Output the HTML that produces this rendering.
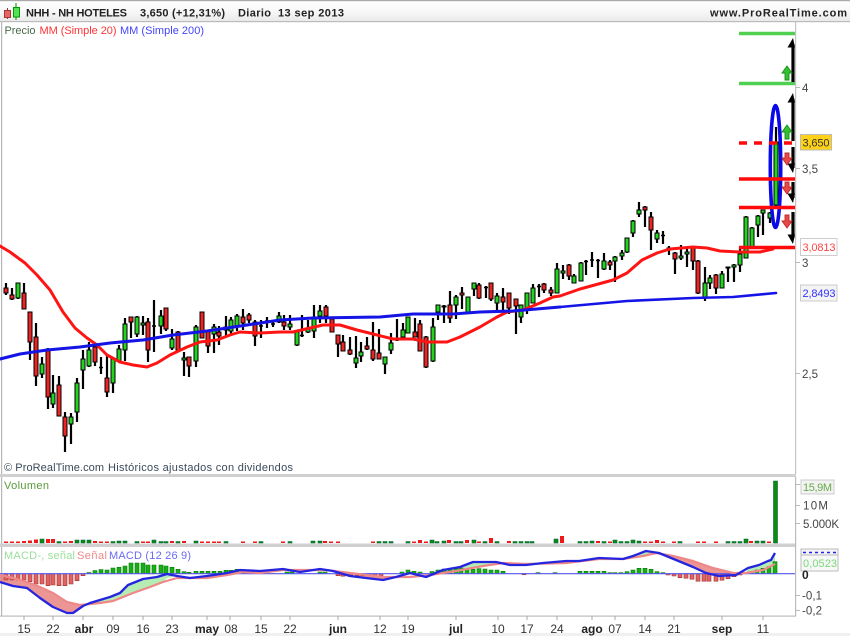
<!DOCTYPE html>
<html lang="es"><head><meta charset="utf-8"><title>NHH - NH HOTELES</title>
<style>
html,body{margin:0;padding:0;background:#fff;width:850px;height:636px;overflow:hidden}
svg{display:block;filter:blur(.35px)}
text{font-family:"Liberation Sans",sans-serif;font-size:11px}
.b{font-weight:bold;fill:#222}
.x{text-anchor:middle;fill:#333;font-size:12px}
.xb{text-anchor:middle;fill:#222;font-weight:bold;font-size:12px}
.a{fill:#444;font-size:11.5px}
</style></head><body>
<svg width="850" height="636" viewBox="0 0 850 636" xmlns="http://www.w3.org/2000/svg">
<defs><linearGradient id="hd" x1="0" y1="0" x2="0" y2="1"><stop offset="0" stop-color="#fff"/><stop offset=".5" stop-color="#f8f8f8"/><stop offset="1" stop-color="#e8e8e8"/></linearGradient></defs>
<rect width="850" height="636" fill="#fff"/>
<rect y="633" width="850" height="3" fill="#f0f0f0"/>
<!-- header -->
<rect x="0" y="0" width="850" height="22" fill="url(#hd)"/>
<rect x="0" y="0" width="850" height="1.2" fill="#aaa"/>
<rect x="0" y="21" width="850" height="1.2" fill="#bbb"/>
<rect x="1" y="22" width="1.2" height="594" fill="#b8b8b8"/>
<path d="M7.5 8V19" stroke="#933" stroke-width="1"/><rect x="4.5" y="10.5" width="6" height="7" fill="#e26666" stroke="#a33"/>
<path d="M16 3V20" stroke="#080" stroke-width="1"/><rect x="13.5" y="7.5" width="6" height="9.5" fill="#55e055" stroke="#090"/>
<text x="26" y="16.5" class="b" textLength="101">NHH - NH HOTELES</text>
<text x="140" y="16.5" class="b" textLength="85">3,650 (+12,31%)</text>
<text x="238" y="16.5" class="b" textLength="33">Diario</text>
<text x="278" y="16.5" class="b" textLength="66">13 sep 2013</text>
<text x="710" y="16.5" class="b" textLength="137">www.ProRealTime.com</text>
<text x="4.5" y="34" fill="#4a6a4a" textLength="31">Precio</text>
<text x="39.5" y="34" fill="#f33" textLength="77">MM (Simple 20)</text>
<text x="120" y="34" fill="#44f" textLength="84">MM (Simple 200)</text>
<!-- panels -->
<rect x="795" y="22" width="1.2" height="452" fill="#c4c4c4"/>
<rect x="0" y="474" width="796" height="3" fill="#d0d0d0"/>
<rect x="0" y="543.5" width="796" height="3.5" fill="#d0d0d0"/>
<rect x="795" y="477" width="1.2" height="139" fill="#bbb"/>
<rect x="0" y="615.5" width="796" height="1.2" fill="#bbb"/>
<path d="M796 87.5h4M796 168.5h4M796 262.5h4M796 373.5h4M796 484.5h4M796 505.5h4M796 523.5h4M796 595.5h4M796 610.5h4" stroke="#bbb" stroke-width="1"/>
<!-- candles: wicks -->
<path fill="none" stroke="#000" stroke-width="2.2" d="M6 283V295M12 288V300M18 283V299M24 283V309M30 312V360M36 323V386M42 357V378M48 348V409M53 375V408M59 376V416M65 412V452M71 413V444M77 378V422M83 350V389M89 342V367M95 345V366M101 357V374M107 355V397M113 358V393M119 345V362M125 318V361M131 317V338M137 316V337M143 316V335M148 318V362M154 300V352M161 310V334M166 308V331M172 329V350M178 331V352M184 352V376M189 357V377M196 325V367M202 312V338M208 330V353M214 324V353M219 326V345M226 316V336M231 317V335M237 314V331M243 309V330M249 313V323M255 320V346M261 320V338M267 317V328M273 320V327M279 312V323M284 315V330M290 315V330M297 330V346M302 315V337M308 320V333M314 305V338M320 305V323M326 305V323M332 319V332M338 335V357M343 335V351M350 337V355M356 336V368M361 342V362M367 337V350M373 322V361M379 329V359M385 357V374M391 333V354M397 319V341M403 323V337M408 317V333M415 318V337M420 320V351M426 336V368M433 318V362M438 305V320M444 305V323M450 291V323M456 295V319M462 287V309M468 297V312M474 283V296M479 283V299M486 286V298M491 283V301M497 293V313M503 288V310M509 293V314M516 299V334M521 305V323M527 293V314M533 284V303M539 284V297M544 283V293M551 287V296M557 263V293M563 265V279M569 264V280M574 274V283M581 262V281M586 260V275M592 252V267M598 259V278M604 253V270M610 260V270M615 256V282M622 250V260M627 238V253M633 220V237M639 202V217M645 206V227M651 212V250M657 230V243M663 231V244M669 246V255M675 252V274M681 245V260M687 248V267M693 246V270M698 260V294M705 267V301M710 275V289M716 274V294M722 271V288M728 267V282M734 264V282M740 247V272M746 216V258M752 227V247M758 215V237M763 210V235M770 212V223M776 127V207"/>
<path fill="none" stroke="#000" d="M99 367.5h4M152 326h4M265 321h4M259 326h4M271 324h4M300 335.5h4M395 340h4M484 287.5h4M537 286.5h4M584 261.5h4M590 260h4M596 260.5h4M661 235.5h4" style="stroke-width:1.6"/>
<!-- green bodies -->
<path fill="#22d41e" stroke="#000" stroke-width="1" d="M16 283h4v15h-4zM40 364h4v10h-4zM51 393h4v11h-4zM69 417h4v7h-4zM75 383h4v29h-4zM81 359h4v11h-4zM87 350h4v16h-4zM111 359h4v24h-4zM117 349h4v12h-4zM123 324h4v26h-4zM135 317h4v17h-4zM141 323h4v2h-4zM159 316h4v10h-4zM170 339h4v9h-4zM182 358h4v2h-4zM194 327h4v34h-4zM212 327h4v7h-4zM224 327h4v3h-4zM229 320h4v11h-4zM235 316h4v10h-4zM277 316h4v6h-4zM288 324h4v3h-4zM295 332h4v13h-4zM306 329h4v3h-4zM312 319h4v12h-4zM318 311h4v5h-4zM354 358h4v5h-4zM359 352h4v4h-4zM383 357h4v7h-4zM389 343h4v7h-4zM401 330h4v7h-4zM406 317h4v16h-4zM431 327h4v34h-4zM436 305h4v7h-4zM442 306h4v1h-4zM454 297h4v8h-4zM466 297h4v15h-4zM472 283h4v6h-4zM495 296h4v7h-4zM519 305h4v12h-4zM525 293h4v15h-4zM531 288h4v15h-4zM555 269h4v24h-4zM561 271h4v2h-4zM572 276h4v7h-4zM579 263h4v18h-4zM602 261h4v8h-4zM613 257h4v4h-4zM620 253h4v3h-4zM625 238h4v14h-4zM631 221h4v12h-4zM637 210h4v4h-4zM655 233h4v6h-4zM667 248h4v2h-4zM679 256h4v2h-4zM685 252h4v2h-4zM703 283h4v15h-4zM708 278h4v5h-4zM720 274h4v14h-4zM726 267h4v1h-4zM732 265h4v2h-4zM738 254h4v11h-4zM744 217h4v41h-4zM750 228h4v19h-4zM756 216h4v9h-4zM761 210h4v3h-4zM768 213h4v5h-4zM774 142h4v63h-4z"/>
<!-- red bodies -->
<path fill="#ee2424" stroke="#000" stroke-width="1" d="M4 288h4v5h-4zM10 295h4v4h-4zM22 293h4v16h-4zM28 312h4v30h-4zM34 337h4v39h-4zM46 349h4v48h-4zM57 385h4v31h-4zM63 417h4v19h-4zM93 347h4v15h-4zM105 378h4v14h-4zM129 317h4v5h-4zM146 322h4v28h-4zM164 308h4v21h-4zM176 332h4v18h-4zM187 357h4v9h-4zM200 312h4v26h-4zM206 331h4v15h-4zM217 332h4v4h-4zM241 317h4v6h-4zM247 315h4v5h-4zM253 322h4v14h-4zM282 322h4v4h-4zM324 307h4v9h-4zM330 319h4v13h-4zM336 335h4v9h-4zM341 342h4v9h-4zM348 350h4v4h-4zM365 346h4v3h-4zM371 350h4v9h-4zM377 353h4v6h-4zM413 332h4v5h-4zM418 324h4v27h-4zM424 337h4v30h-4zM448 305h4v13h-4zM460 293h4v2h-4zM477 285h4v13h-4zM489 283h4v16h-4zM501 297h4v5h-4zM507 293h4v15h-4zM514 299h4v7h-4zM542 284h4v6h-4zM549 290h4v3h-4zM567 265h4v11h-4zM608 262h4v3h-4zM643 207h4v3h-4zM649 217h4v13h-4zM673 253h4v6h-4zM691 247h4v14h-4zM696 261h4v32h-4zM714 275h4v13h-4z"/>
<!-- moving averages -->
<path fill="none" stroke="#ff1414" stroke-width="3" stroke-linejoin="round" stroke-linecap="round" d="M0 246L10 252L25 263L37 275L50 290L63 312L75 328L87 338L97 345L107 355L120 362L133 365L147 367L157 363L170 355L187 347L200 342L217 340L230 335L240 332L260 333L280 332L293 332L310 328L323 325L340 325L357 330L377 335L393 339L413 339L427 342L447 342L460 337L480 327L497 317L507 312L523 310L540 303L553 297L560 296L580 289L613 280L627 273L642 260L657 253L670 249L693 247L707 248L720 251L740 252L760 252L773 249"/>
<path fill="none" stroke="#1414e6" stroke-width="3.1" stroke-linejoin="round" stroke-linecap="round" d="M0 359L20 354L47 350L80 347L110 343L143 340L173 335L207 331L247 325L280 320L313 318L380 317L413 314L453 314L480 312L513 311L560 307"/>
<path fill="none" stroke="#1414e6" stroke-width="2.6" stroke-linejoin="round" stroke-linecap="round" d="M560 307L627 301L693 298L733 297L776 293"/>
<ellipse cx="775.5" cy="166.5" rx="5.2" ry="61" fill="none" stroke="#0808e8" stroke-width="3.6"/>
<!-- levels -->
<path stroke="#50d050" stroke-width="3.4" d="M739 33.5H795M739 83.5H795"/>
<path stroke="#ff0a0a" stroke-width="3.4" d="M739 179H795M739 207.5H795M739 247.5H795"/>
<path stroke="#ff0a0a" stroke-width="3.4" d="M739 143h8M754 143h8M769 143h8M784 143h8"/>
<!-- black arrows -->
<path fill="none" stroke="#000" stroke-width="3.2" d="M793 44V82M793 99V141M793 147V168M793 182V198M793 212V238"/>
<path fill="#000" d="M793 38L787.5 47.5H795zM793 93L787.5 102.5H795zM793 173L787.5 163.5H795zM793 203L787.5 193.5H795zM793 244L787.5 234.5H795z"/>
<!-- small arrows -->
<path fill="#33c033" stroke="#169016" stroke-width=".9" d="M787 66L782 73H785V80H789V73H792z"/>
<path fill="#33c033" stroke="#169016" stroke-width=".9" d="M787 125L782 132H785V139H789V132H792z"/>
<path fill="#e84848" stroke="#c02828" stroke-width=".9" d="M787 165L782 158H785V153H789V158H792z"/>
<path fill="#e84848" stroke="#c02828" stroke-width=".9" d="M787 194L782 187H785V182H789V187H792z"/>
<path fill="#e84848" stroke="#c02828" stroke-width=".9" d="M787 228L782 221H785V215H789V221H792z"/>
<!-- price labels -->
<text x="802" y="92" class="a">4</text>
<text x="802" y="173" class="a" textLength="16">3,5</text>
<text x="802" y="267" class="a">3</text>
<text x="802" y="378" class="a" textLength="16">2,5</text>
<rect x="800.5" y="134.5" width="31" height="15.5" fill="#ffd21a" stroke="#bbb"/>
<text x="802.5" y="146.5" fill="#333" textLength="27">3,650</text>
<rect x="800.5" y="238.5" width="36.5" height="17" fill="#fff" stroke="#ccc"/>
<text x="802.5" y="251" fill="#f44" textLength="33">3,0813</text>
<rect x="800.5" y="285" width="36.5" height="16" fill="#f4f4f4" stroke="#ccc"/>
<text x="802.5" y="297" fill="#33f" textLength="33">2,8493</text>
<text x="4" y="471" fill="#3a4a5a" textLength="100">© ProRealTime.com</text>
<text x="108" y="471" fill="#3a4a5a" textLength="185">Históricos ajustados con dividendos</text>
<!-- volume -->
<text x="4" y="489" fill="#5a9a3a" textLength="45">Volumen</text>
<path fill="#0b8a0b" stroke="#064" stroke-width=".6" d="M40 539h4v4h-4zM57 541.5h4v1.5h-4zM75 540h4v3h-4zM81 540h4v3h-4zM87 540h4v3h-4zM111 541.5h4v1.5h-4zM117 541h4v2h-4zM123 541h4v2h-4zM135 541.5h4v1.5h-4zM152 540h4v3h-4zM159 541.5h4v1.5h-4zM164 541.5h4v1.5h-4zM176 541.5h4v1.5h-4zM194 541h4v2h-4zM224 541.5h4v1.5h-4zM259 541.5h4v1.5h-4zM288 541.5h4v1.5h-4zM311 541h4v2h-4zM318 541h4v2h-4zM377 541.5h4v1.5h-4zM383 541.5h4v1.5h-4zM389 541.5h4v1.5h-4zM406 541.5h4v1.5h-4zM430 540h4v3h-4zM435 541.5h4v1.5h-4zM442 541h4v2h-4zM454 541.5h4v1.5h-4zM459 541.5h4v1.5h-4zM472 540h4v3h-4zM483 541.5h4v1.5h-4zM495 541.5h4v1.5h-4zM513 541.5h4v1.5h-4zM519 541.5h4v1.5h-4zM525 541.5h4v1.5h-4zM530 541.5h4v1.5h-4zM554 539h4v4h-4zM578 541.5h4v1.5h-4zM584 541.5h4v1.5h-4zM590 541h4v2h-4zM602 541.5h4v1.5h-4zM613 540h4v3h-4zM619 541.5h4v1.5h-4zM625 541.5h4v1.5h-4zM631 540h4v3h-4zM637 541h4v2h-4zM678 541.5h4v1.5h-4zM726 541.5h4v1.5h-4zM732 541.5h4v1.5h-4zM738 541.5h4v1.5h-4zM744 539h4v4h-4zM755 541h4v2h-4zM761 541h4v2h-4zM773.5 481h4v62h-4z"/>
<path fill="#f01818" d="M4 541.5h4v1.5h-4zM10 541.5h4v1.5h-4zM16 541.5h4v1.5h-4zM22 541h4v2h-4zM28 540.5h4v2.5h-4zM34 539.5h4v3.5h-4zM46 539h4v4h-4zM51 539h4v4h-4zM63 541.5h4v1.5h-4zM69 541h4v2h-4zM93 541h4v2h-4zM99 541.5h4v1.5h-4zM105 541.5h4v1.5h-4zM141 541.5h4v1.5h-4zM146 541.5h4v1.5h-4zM170 541h4v2h-4zM182 541h4v2h-4zM200 541.5h4v1.5h-4zM206 541.5h4v1.5h-4zM212 541.5h4v1.5h-4zM217 541.5h4v1.5h-4zM241 541.5h4v1.5h-4zM253 541.5h4v1.5h-4zM281 541.5h4v1.5h-4zM323 541h4v2h-4zM329 541.5h4v1.5h-4zM336 541.5h4v1.5h-4zM371 541.5h4v1.5h-4zM412 541.5h4v1.5h-4zM418 540h4v3h-4zM424 541.5h4v1.5h-4zM447 540h4v3h-4zM465 540h4v3h-4zM477 541.5h4v1.5h-4zM489 538h4v5h-4zM507 541h4v2h-4zM560 536h4v7h-4zM596 541h4v2h-4zM608 541.5h4v1.5h-4zM643 541.5h4v1.5h-4zM649 541.5h4v1.5h-4zM655 540h4v3h-4zM661 541.5h4v1.5h-4zM672 541.5h4v1.5h-4zM696 541.5h4v1.5h-4zM702 541.5h4v1.5h-4zM714 541.5h4v1.5h-4zM749 541h4v2h-4zM767 541.5h4v1.5h-4z"/>
<rect x="801" y="480" width="33" height="14" fill="#f2f2f2" stroke="#ccc"/>
<text x="803" y="491" fill="#6aaa4a" textLength="29">15,9M</text>
<text x="803" y="509.5" class="a" textLength="25">10M</text>
<text x="803" y="528" class="a" textLength="36">5.000K</text>
<!-- MACD -->
<text x="4" y="559" fill="#9adf9a" textLength="71">MACD-, señal</text>
<text x="77" y="559" fill="#ee8888" textLength="30">Señal</text>
<text x="109" y="559" fill="#6a6af5" textLength="82">MACD (12 26 9)</text>
<path fill="#e57272" d="M0 575L13 578L27 582L40 587L53 593L67 602L80 605L88 604L83 606L73 613L67 613L53 607L40 598L27 588L13 586L0 582zM350 573L383 577L396 577L383 580L366 578zM659 553L673 556L693 561L713 568L733 573L743 573L736 575L719 576L706 573L693 567L676 560z" fill-opacity=".75"/>
<path fill="#b4ecb4" d="M88 604L100 600L110 597L120 593L128 585L143 579L157 577L167 574L177 576L167 578L163 582L150 587L133 593L113 601L100 603zM432 575L443 570L460 567L473 562L496 562L503 563L483 566L456 571zM623 559L633 556L646 551L659 553L643 556zM746 573L748 568L759 565L768 561L771 560L775 553L775 564L763 570z"/>
<path fill="#e06262" stroke="#a03030" stroke-width=".6" d="M4 573.7h4v6.3h-4zM10 573.7h4v6.3h-4zM16 573.7h4v6.3h-4zM22 573.7h4v6.3h-4zM28 573.7h4v8h-4zM34 573.7h4v10.3h-4zM40 573.7h4v10.3h-4zM46 573.7h4v12h-4zM51 573.7h4v11.3h-4zM57 573.7h4v12h-4zM63 573.7h4v12h-4zM69 573.7h4v10.3h-4zM75 573.7h4v7h-4zM81 573.7h4v2h-4zM336 573.7h4v2h-4zM341 573.7h4v2.5h-4zM349 573.7h4v2h-4zM355 573.7h4v2h-4zM361 573.7h4v2h-4zM367 573.7h4v2h-4zM373 573.7h4v2h-4zM379 573.7h4v2h-4zM522 573.7h4v1h-4zM666 573.7h4v1.3h-4zM672 573.7h4v2.3h-4zM678 573.7h4v4h-4zM684 573.7h4v4.5h-4zM690 573.7h4v5.5h-4zM696 573.7h4v7.5h-4zM702 573.7h4v7.5h-4zM707 573.7h4v7.5h-4zM714 573.7h4v7.5h-4zM720 573.7h4v6.5h-4zM726 573.7h4v5h-4zM732 573.7h4v3h-4zM738 573.7h4v1.3h-4z"/>
<path fill="#16b016" stroke="#0a7a0a" stroke-width=".6" d="M87 572.5h4v1.2h-4zM93 570.5h4v3.2h-4zM99 569.5h4v4.2h-4zM105 570h4v3.7h-4zM111 568h4v5.7h-4zM117 567.3h4v6.4h-4zM123 566h4v7.7h-4zM129 563h4v10.7h-4zM135 563h4v10.7h-4zM141 563h4v10.7h-4zM146 565h4v8.7h-4zM152 565h4v8.7h-4zM159 565h4v8.7h-4zM164 566h4v7.7h-4zM170 567.3h4v6.4h-4zM176 569.3h4v4.4h-4zM182 571.7h4v2h-4zM187 572.3h4v1.4h-4zM194 571.3h4v2.4h-4zM200 571.3h4v2.4h-4zM206 571.3h4v2.4h-4zM212 571.3h4v2.4h-4zM218 571.3h4v2.4h-4zM224 570.3h4v3.4h-4zM229 570.3h4v3.4h-4zM235 569.3h4v4.4h-4zM241 571.3h4v2.4h-4zM285 572h4v1.7h-4zM290 572h4v1.7h-4zM318 572h4v1.7h-4zM323 572h4v1.7h-4zM400 572h4v1.7h-4zM406 570h4v3.7h-4zM412 571.3h4v2.4h-4zM418 572h4v1.7h-4zM430 571.5h4v2.2h-4zM436 570h4v3.7h-4zM442 569h4v4.7h-4zM448 569h4v4.7h-4zM454 568.3h4v5.4h-4zM459 568h4v5.7h-4zM465 569.7h4v4h-4zM471 569.3h4v4.4h-4zM477 568.7h4v5h-4zM483 569h4v4.7h-4zM489 570h4v3.7h-4zM495 570h4v3.7h-4zM501 571.3h4v2.4h-4zM536 572.7h4v1h-4zM553 572.7h4v1h-4zM578 571.3h4v2.4h-4zM584 571.3h4v2.4h-4zM590 571.3h4v2.4h-4zM596 571.3h4v2.4h-4zM602 571.3h4v2.4h-4zM608 572.7h4v1h-4zM613 572.7h4v1h-4zM619 572.7h4v1h-4zM625 571.7h4v2h-4zM631 570h4v3.7h-4zM637 568.3h4v5.4h-4zM643 568.3h4v5.4h-4zM649 569.3h4v4.4h-4zM655 571.7h4v2h-4zM661 572.7h4v1h-4zM749 571.7h4v2h-4zM755 570h4v3.7h-4zM761 568.3h4v5.4h-4zM767 566.7h4v7h-4zM773 561.7h4v12h-4z"/>
<path stroke="#5555ee" stroke-width="1.2" d="M0 573.7H795"/>
<path fill="none" stroke="#ee8888" stroke-width="2.2" stroke-linejoin="round" d="M0 575L13 578L27 582L40 587L53 593L67 602L80 605L100 603L113 601L133 593L150 587L163 582L177 578L190 578L207 578L227 575L243 572L260 573L283 570L303 570L326 570L350 573L383 577L410 577L430 575L456 571L483 566L503 563L526 564L566 563L599 559L623 559L643 556L656 553L673 556L693 561L713 568L733 573L746 573L763 570L775 564"/>
<path fill="none" stroke="#2525e0" stroke-width="2.3" stroke-linejoin="round" d="M0 582L13 586L27 588L40 598L53 607L67 613L73 613L83 606L90 603L100 600L110 597L120 593L128 585L143 579L157 577L167 574L177 576L190 578L207 576L227 573L240 570L260 571L283 569L300 572L320 569L333 571L350 576L366 578L383 580L396 577L410 573L426 577L443 570L460 567L473 562L496 562L510 565L526 565L543 563L566 561L579 561L599 558L623 559L633 556L646 551L659 553L676 560L693 567L706 573L719 576L736 575L748 568L759 565L768 561L771 560L775 553"/>
<rect x="801" y="549" width="37" height="22" fill="#f4f4f4" stroke="#bbb"/>
<path d="M803 552.5h3M809 552.5h3M815 552.5h3M821 552.5h3M827 552.5h3M833 552.5h3" stroke="#22e" stroke-width="1.4"/>
<rect x="801" y="555" width="37" height="16" fill="#f8f8f8" stroke="#bbb"/>
<text x="803" y="567" fill="#7ad87a" textLength="34">0,0523</text>
<rect x="802" y="571.5" width="10" height="6" fill="#fff"/>
<text x="802" y="579" fill="#222" font-weight="bold" style="font-size:12px">0</text>
<text x="802" y="599.5" class="a" textLength="20">-0,1</text>
<text x="802" y="614.5" class="a" textLength="20">-0,2</text>
<!-- x axis -->
<path stroke="#aaa" stroke-width="1" d="M24 616v4M53 616v4M83 616v4M113 616v4M143 616v4M172 616v4M207 616v4M230 616v4M261 616v4M290 616v4M338 616v4M380 616v4M408 616v4M456 616v4M498 616v4M527 616v4M557 616v4M592 616v4M615 616v4M645 616v4M674 616v4M722 616v4M763 616v4"/>
<text x="24" y="633" class="x">15</text><text x="53" y="633" class="x">22</text>
<text x="84" y="633" class="xb">abr</text><text x="113" y="633" class="x">09</text>
<text x="143" y="633" class="x">16</text><text x="172" y="633" class="x">23</text>
<text x="207" y="633" class="xb">may</text><text x="231" y="633" class="x">08</text>
<text x="261" y="633" class="x">15</text><text x="290" y="633" class="x">22</text>
<text x="338" y="633" class="xb">jun</text><text x="380" y="633" class="x">12</text>
<text x="408" y="633" class="x">19</text><text x="456" y="633" class="xb">jul</text>
<text x="498" y="633" class="x">10</text><text x="527" y="633" class="x">17</text>
<text x="557" y="633" class="x">24</text><text x="592" y="633" class="xb">ago</text>
<text x="615" y="633" class="x">07</text><text x="645" y="633" class="x">14</text>
<text x="674" y="633" class="x">21</text><text x="722" y="633" class="xb">sep</text>
<text x="763" y="633" class="x">11</text>
</svg>
</body></html>
